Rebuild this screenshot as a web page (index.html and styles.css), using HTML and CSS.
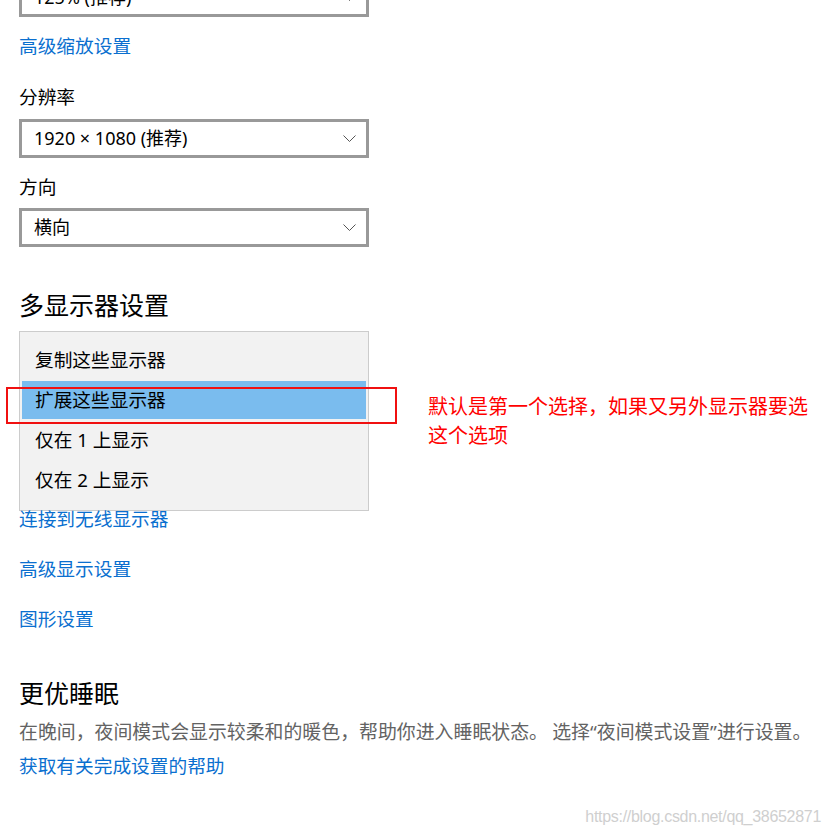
FILE: index.html
```html
<!DOCTYPE html>
<html lang="zh-CN">
<head>
<meta charset="utf-8">
<title>显示设置</title>
<link rel="stylesheet" href="styles.css">
</head>
<body>
<div class="page">
  <div class="select first"><span class="select-text">125% (推荐)</span><svg class="chev" width="13" height="7" viewBox="0 0 13 7"><polyline points="0.5,0.5 6.5,6.5 12.5,0.5" fill="none" stroke="#555" stroke-width="1"/></svg></div>
  <a class="link l-scale">高级缩放设置</a>
  <div class="label l-res">分辨率</div>
  <div class="select s-res"><span class="select-text">1920 × 1080 (推荐)</span><svg class="chev" width="13" height="7" viewBox="0 0 13 7"><polyline points="0.5,0.5 6.5,6.5 12.5,0.5" fill="none" stroke="#555" stroke-width="1"/></svg></div>
  <div class="label l-dir">方向</div>
  <div class="select s-dir"><span class="select-text">横向</span><svg class="chev" width="13" height="7" viewBox="0 0 13 7"><polyline points="0.5,0.5 6.5,6.5 12.5,0.5" fill="none" stroke="#555" stroke-width="1"/></svg></div>
  <h2 class="heading h-multi">多显示器设置</h2>
  <div class="popup">
    <div class="item">复制这些显示器</div>
    <div class="item selected">扩展这些显示器</div>
    <div class="item">仅在 1 上显示</div>
    <div class="item">仅在 2 上显示</div>
    <div class="red-box"></div>
    <div class="note">默认是第一个选择，如果又另外显示器要选<br>这个选项</div>
  </div>
  <a class="link l-wireless">连接到无线显示器</a>
  <a class="link l-gap">高级显示设置</a>
  <a class="link l-gap">图形设置</a>
  <h2 class="heading h-sleep">更优睡眠</h2>
  <p class="desc">在晚间，夜间模式会显示较柔和的暖色，帮助你进入睡眠状态。 选择<span class="q">“</span>夜间模式设置<span class="q">”</span>进行设置。</p>
  <a class="link l-help">获取有关完成设置的帮助</a>
</div>
<div class="watermark">https://blog.csdn.net/qq_38652871</div>
</body>
</html>
```
FILE: styles.css
```css
html, body {
  margin: 0;
  padding: 0;
  background: #fff;
  height: 835px;
  overflow: hidden;
}
body {
  position: relative;
  font-family: "Noto Sans", "Noto Sans CJK SC", sans-serif;
  color: #000;
}
.page {
  padding-left: 19px;
  display: flex;
  flex-direction: column;
  align-items: flex-start;
}
.select {
  box-sizing: border-box;
  width: 350px;
  height: 39px;
  border: 3px solid #999;
  background: #fff;
  display: flex;
  align-items: center;
  justify-content: space-between;
  padding: 0 10px 2px 12px;
  font-size: 18px;
  line-height: 24px;
}
.select.first { margin-top: -22px; }
.chev { display: block; margin-top: 2px; }
.link {
  display: block;
  color: #0a6fcf;
  font-size: 18.7px;
  line-height: 24px;
  font-family: "Noto Sans CJK SC", sans-serif;
}
.label {
  font-size: 18.7px;
  line-height: 24px;
  font-family: "Noto Sans CJK SC", sans-serif;
}
.l-scale { margin-top: 16px; }
.l-res { margin-top: 27px; }
.s-res { margin-top: 11px; }
.l-dir { margin-top: 16px; }
.s-dir { margin-top: 10px; }
.heading {
  margin: 0;
  font-weight: 400;
  font-size: 25px;
  line-height: 32px;
  font-family: "Noto Sans CJK SC", sans-serif;
}
.h-multi { margin-top: 41px; }
.popup {
  position: relative;
  box-sizing: border-box;
  width: 350px;
  height: 180px;
  margin-top: 11px;
  border: 1px solid #cccccc;
  background: #f2f2f2;
  padding: 8px 1px 10px;
  display: flex;
  flex-direction: column;
  font-size: 18.7px;
  font-family: "Noto Sans", "Noto Sans CJK SC", sans-serif;
}
.item {
  box-sizing: border-box;
  height: 40px;
  border: 1px solid transparent;
  background-clip: padding-box;
  padding: 0 0 4px 13px;
  display: flex;
  align-items: center;
}
.item.selected {
  background-color: #7abcee;
}
.red-box {
  position: absolute;
  left: -14px;
  top: 55px;
  width: 391px;
  height: 37px;
  box-sizing: border-box;
  border: 2px solid #f01010;
}
.note {
  position: absolute;
  left: 408px;
  top: 59px;
  white-space: nowrap;
  color: #ff0000;
  font-size: 20px;
  line-height: 29px;
  font-family: "Noto Sans CJK SC", sans-serif;
}
.l-wireless { margin-top: -5px; position: relative; }
.l-gap { margin-top: 26px; }
.h-sleep { margin-top: 46px; }
.desc {
  margin: 11px 0 0;
  color: #636363;
  font-size: 18.9px;
  line-height: 24px;
  font-family: "Noto Sans CJK SC", sans-serif;
  white-space: nowrap;
}
.q { font-family: "Noto Sans", sans-serif; }
.l-help { margin-top: 9px; }
.watermark {
  position: absolute;
  right: 5px;
  top: 805px;
  font-family: "Liberation Sans", sans-serif;
  font-size: 16px;
  line-height: 24px;
  color: #cfcfcf;
  letter-spacing: -0.3px;
}
```
